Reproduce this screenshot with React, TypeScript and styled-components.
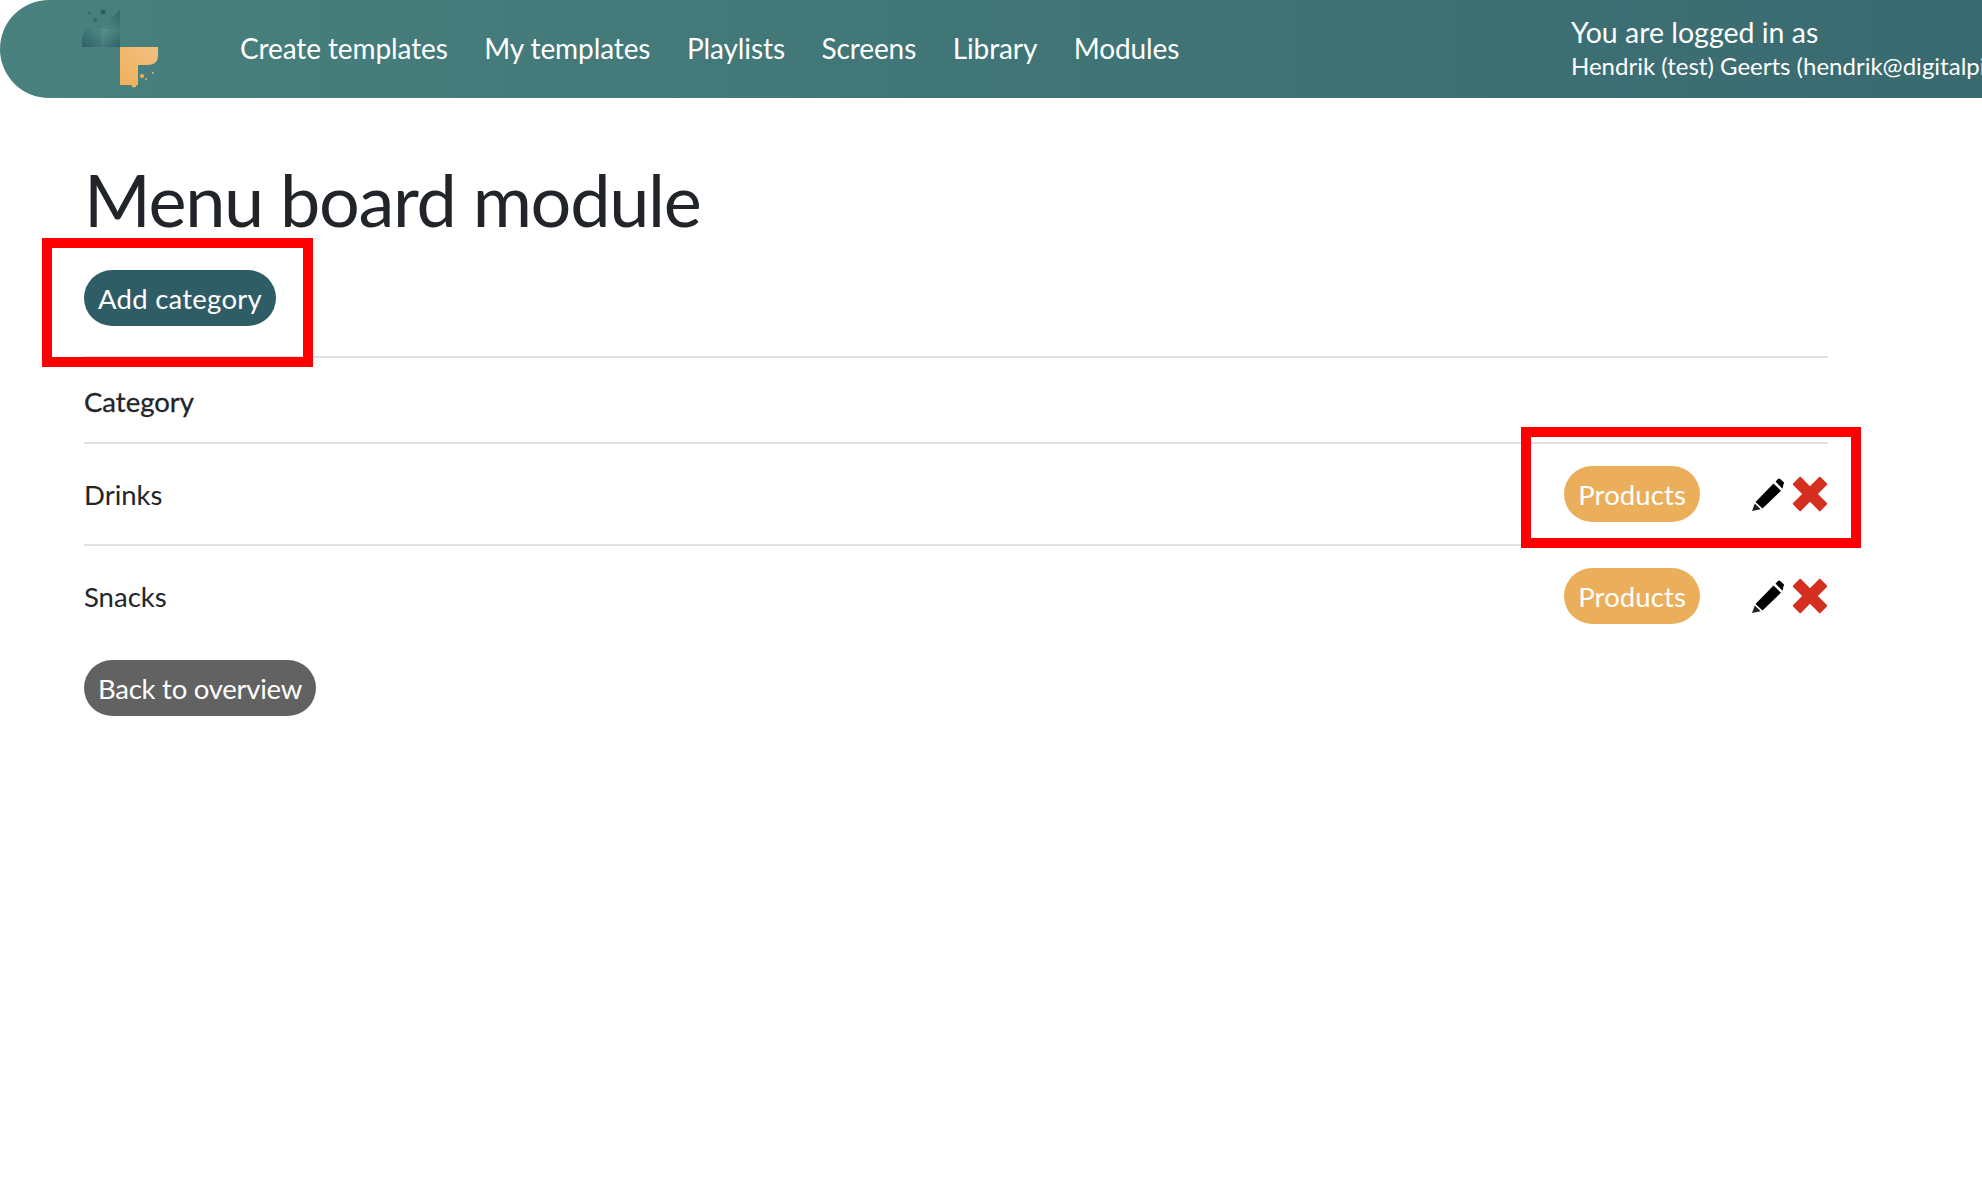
import React from "react";
import styled, { createGlobalStyle } from "styled-components";

const Global = createGlobalStyle`
  html, body { margin: 0; padding: 0; background: #fff; overflow: hidden; }
  body { font-family: "Lato", "Noto Sans", sans-serif; color: #212529; }
  * { box-sizing: border-box; }
`;

const Page = styled.div`
  position: relative;
  width: 1982px;
  height: 1186px;
  overflow: hidden;
`;

const Header = styled.header`
  display: flex;
  align-items: center;
  height: 98px;
  border-radius: 49px 0 0 49px;
  background: linear-gradient(90deg, #48817e 0%, #396a70 100%);
  color: #fff;
  white-space: nowrap;
`;

const LogoBox = styled.div`
  width: 240px;
  padding-left: 81px;
  display: flex;
  align-items: center;
  flex-shrink: 0;
`;

const Nav = styled.nav`
  display: flex;
  gap: 36.5px;
  flex: 1;
  padding-bottom: 2px;
`;

const NavLink = styled.a`
  font-size: 28px;
  letter-spacing: -0.1px;
  color: #fff;
`;

const User = styled.div`
  width: 411px;
  flex-shrink: 0;
  overflow: hidden;
`;

const UserTop = styled.div`
  font-size: 28.5px;
  line-height: 33px;
`;

const UserName = styled.div`
  font-size: 24px;
  line-height: 33px;
`;

const Main = styled.main`
  width: 1828px;
  padding: 62px 0 0 84px;
`;

const Title = styled.h1`
  margin: 0 0 20px;
  height: 90px;
  font-size: 72px;
  line-height: 78px;
  font-weight: 400;
  letter-spacing: -1.3px;
  color: #212529;
`;

const Pill = styled.a<{ $bg: string; $track?: number }>`
  display: inline-flex;
  align-items: center;
  height: 56px;
  padding: 1px 14px 0;
  border-radius: 28px;
  background: ${(p) => p.$bg};
  color: #fff;
  font-size: 27.5px;
  letter-spacing: ${(p) => p.$track ?? 0}px;
  white-space: nowrap;
`;

const TableHead = styled.div`
  margin-top: 30px;
  height: 88px;
  padding-top: 2px;
  display: flex;
  align-items: center;
  border-top: 2px solid #dee2e6;
  border-bottom: 2px solid #dee2e6;
  font-size: 27.5px;
  -webkit-text-stroke: 0.3px #212529;
`;

const Row = styled.div<{ $last?: boolean }>`
  height: ${(p) => (p.$last ? 100 : 102)}px;
  display: flex;
  align-items: center;
  justify-content: space-between;
  border-bottom: ${(p) => (p.$last ? "none" : "2px solid #dee2e6")};
  font-size: 27.5px;
`;

const Actions = styled.div`
  display: flex;
  align-items: center;
`;

const Icons = styled.div`
  display: flex;
  align-items: center;
  gap: 8px;
  margin-left: 52px;
`;

const BackRow = styled.div`
  margin-top: 14px;
`;

const Highlight = styled.div<{ $x: number; $y: number; $w: number; $h: number }>`
  position: absolute;
  left: ${(p) => p.$x}px;
  top: ${(p) => p.$y}px;
  width: ${(p) => p.$w}px;
  height: ${(p) => p.$h}px;
  border: 10px solid #ff0000;
  pointer-events: none;
`;

const Logo = () => (
  <svg width="78" height="90" viewBox="0 0 78 90" aria-hidden="true">
    <defs>
      <linearGradient id="tl" x1="0" y1="1" x2="1" y2="0">
        <stop offset="0" stopColor="#2f5f66" />
        <stop offset="1" stopColor="#4f8a86" />
      </linearGradient>
      <linearGradient id="tr" x1="0" y1="0" x2="1" y2="1">
        <stop offset="0" stopColor="#5c9490" />
        <stop offset="1" stopColor="#2f6167" />
      </linearGradient>
      <linearGradient id="tu" x1="1" y1="0" x2="0" y2="1">
        <stop offset="0" stopColor="#34666b" />
        <stop offset="1" stopColor="#4f8a86" />
      </linearGradient>
      <linearGradient id="or" x1="0" y1="1" x2="1" y2="0">
        <stop offset="0" stopColor="#eeb05c" />
        <stop offset="1" stopColor="#f3c081" />
      </linearGradient>
    </defs>
    <path d="M1 43V35Q1 25 12 25H21V43z" fill="url(#tl)" />
    <path d="M21 25H39V43H21z" fill="url(#tr)" />
    <path d="M21 25L39 5V25z" fill="url(#tu)" />
    <circle cx="22" cy="8" r="2.500" fill="#2f5f66" />
    <circle cx="14" cy="16" r="2" fill="#356a6e" />
    <circle cx="8" cy="9" r="1.300" fill="#356a6e" />
    <path d="M39 43H77V52Q77 61 66 61H57V81H39z" fill="url(#or)" />
    <circle cx="61" cy="72" r="2" fill="#eeb05c" />
    <circle cx="53" cy="81" r="2.500" fill="#eeb05c" />
    <circle cx="65" cy="75" r="1" fill="#eeb05c" />
    <circle cx="72" cy="69" r="1" fill="#eeb05c" />
  </svg>
);

const PencilIcon = () => (
  <svg width="32" height="33" viewBox="0 0 32 33" aria-hidden="true">
    <path d="M3.500 24L21.500 5.500 29 12.800 10.500 30.500z" fill="#000" />
    <path d="M23.500 3.500L26 1q1-1 2.200 0L31.500 4q1 1 0 2.200L30.500 10.800z" fill="#000" />
    <path d="M0 33L2.800 25.500 8.800 31.200z" fill="#222" />
  </svg>
);

const CrossIcon = () => (
  <svg width="36" height="36" viewBox="0 0 36 36" aria-hidden="true">
    <polygon
      points="18,11.600 27.800,1.800 34.200,8.200 24.400,18 34.200,27.800 27.800,34.200 18,24.400 8.200,34.200 1.800,27.800 11.600,18 1.800,8.200 8.200,1.800"
      fill="#d52f20"
      stroke="#d52f20"
      strokeWidth="2"
      strokeLinejoin="round"
    />
  </svg>
);

const categories = ["Drinks", "Snacks"];

export default function App() {
  return (
    <Page>
      <Global />
      <Header>
        <LogoBox>
          <Logo />
        </LogoBox>
        <Nav>
          <NavLink>Create templates</NavLink>
          <NavLink>My templates</NavLink>
          <NavLink>Playlists</NavLink>
          <NavLink>Screens</NavLink>
          <NavLink>Library</NavLink>
          <NavLink>Modules</NavLink>
        </Nav>
        <User>
          <UserTop>You are logged in as</UserTop>
          <UserName>Hendrik (test) Geerts (hendrik@digitalpixels.be)</UserName>
        </User>
      </Header>
      <Main>
        <Title>Menu board module</Title>
        <Pill $bg="#2f5d66" $track={0.25}>Add category</Pill>
        <TableHead>Category</TableHead>
        {categories.map((c, i) => (
          <Row key={c} $last={i === categories.length - 1}>
            {c}
            <Actions>
              <Pill $bg="#ebaf5c" $track={0.1}>Products</Pill>
              <Icons>
                <PencilIcon />
                <CrossIcon />
              </Icons>
            </Actions>
          </Row>
        ))}
        <BackRow>
          <Pill $bg="#626262" $track={-0.25}>Back to overview</Pill>
        </BackRow>
      </Main>
      <Highlight $x={42} $y={238} $w={271} $h={129} />
      <Highlight $x={1521} $y={427} $w={340} $h={121} />
    </Page>
  );
}
